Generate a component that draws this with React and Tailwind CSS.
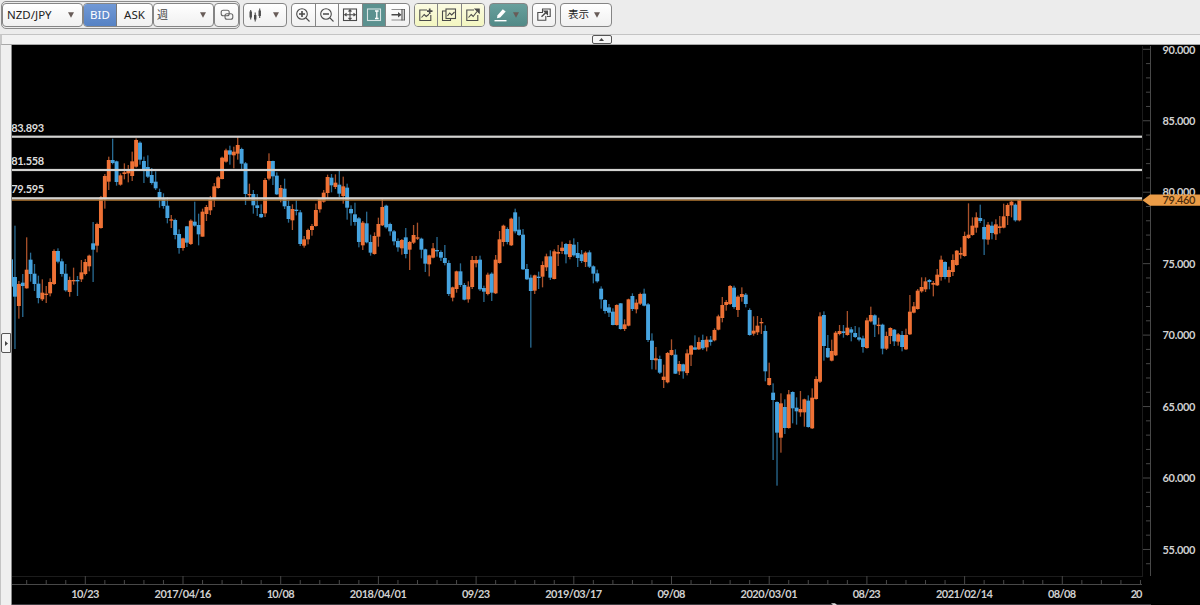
import React from "react";

// Weekly bars: direction, high, body top, body bottom, low (in 1/3 px below `top`)
const SEGMENTS = [
  {
    top: 110,
    bars: `d 448 448 530 530|d 347 501 560 717|u 513 522 588 626|d 492 518 528 621|u 382 479 535 536|d 428 449 492 515|d 462 491 522 543|d 497 521 564 580|u 508 548 568 573|u 528 551 555 579|u 505 516 550 559|u 418 423 522 525|d 415 423 455 460|d 446 454 492 500|d 462 491 541 545|u 500 510 546 560|u 473 510 514 524|d 498 510 514 558|u 450 487 508 516|u 447 456 492 496|u 434 437 469 484|d 336 400 419 516|u 338 342 407 427|u 258 262 354 356|u 192 198 268 296|u 140 150 215 240|d 86 150 159 163|d 152 154 216 227|u 190 196 224 227|u 160 187 192 208|u 165 183 190 217|u 125 154 198 213|u 85 90 170 173|d 94 98 149 164|d 140 153 180 219|d 136 171 200 204|d 174 195 219 224|d 184 215 235 240|d 236 246 269 293|d 250 267 288 296|d 262 287 324 340|u 315 328 332 354|d 326 330 375 388|d 358 372 414 431|u 383 385 414 422|d 348 349 398 411|u 328 332 402 405|d 275 335 347 350|d 311 345 373 406|u 296 305 380 380|u 285 291 312 333|u 258 268 301 315|u 219 229 268 291|u 198 202 234 236|u 140 143 207 208|u 116 121 155 158|d 107 121 134 164|u 110 125 136 175|u 81 105 131 149|d 113 117 161 178|d 156 160 252 285|u 221 252 256 266|d 240 252 286 311|d 252 286 294 318|d 283 312 322 324|u 204 210 310 321|u 130 153 206 211|d 152 153 199 225|d 187 197 253 255|u 225 234 263 277|d 206 236 289 297|d 270 288 327 338|u 283 297 331 360|d 270 299 303 316|d 300 307 402 408|u 378 388 407 413|u 356 360 388 403|u 342 348 360 377|u 281 300 348 350|u 265 267 298 308|u 240 248 275 278|u 194 201 249 268|d 192 203 226 247|u 193 218 231 237|d 180 224 251 261|u 200 229 258 281|d 221 233 293 329|d 286 297 310 347|d 278 313 336 347|d 321 325 396 412|u 333 338 406 420|d 305 340 397 400|d 374 396 428 437|u 367 378 432 434|u 323 342 380 410`,
  },
  {
    top: 180,
    bars: `u 55 81 136 138|d 74 77 142 146|d 128 132 154 167|d 150 154 184 196|d 175 183 202 215|u 177 180 205 224|d 144 172 222 235|u 183 186 209 270|u 135 165 188 192|u 128 172 176 180|d 173 176 209 235|d 206 208 251 276|u 224 226 253 289|u 189 205 233 235|d 171 210 214 230|d 211 216 233 243|d 195 234 249 256|d 241 249 342 348|u 320 322 353 364|u 272 274 327 338|d 250 274 315 321|d 309 315 359 361|u 304 320 358 368|u 228 240 321 327|u 228 240 250 262|d 227 239 328 333|d 317 324 335 366|u 278 284 342 346|d 277 281 338 363|u 225 239 340 342|u 153 178 249 251|u 134 137 186 199|d 142 147 186 193|u 113 116 196 198|d 86 97 154 160|d 110 149 165 168|d 147 164 268 270|d 252 267 298 300|d 284 293 333 503|u 284 286 332 342|d 275 290 294 327|u 244 255 290 322|u 221 229 262 273|d 211 229 293 300|u 208 214 297 298|u 195 216 221 258`,
  },
  {
    top: 220,
    bars: `u 65 83 93 102|d 69 72 103 130|u 61 72 111 118|d 55 74 106 110|d 66 99 114 141|d 90 103 123 129|u 94 98 126 141|d 91 97 140 144|d 136 139 161 190|d 149 160 184 188|d 199 206 238 266|d 238 240 273 281|d 252 262 278 291|d 265 275 315 316|u 253 255 315 317|d 249 250 327 329|u 298 313 327 333|u 236 238 317 319|d 220 228 267 273|u 238 248 268 280|u 218 222 251 255|d 206 221 257 259|d 249 253 360 366|d 340 362 420 448|u 381 415 421 449|d 407 417 458 462|u 434 470 480 504|u 396 399 487 490|u 358 390 405 407|d 388 404 461 462|u 423 432 454 465|d 431 433 454 476|u 388 400 459 466|u 375 377 404 438|d 346 382 389 390|u 352 366 388 390|d 344 360 385 390|u 349 359 382 394|d 348 359 366 377|u 325 330 361 364|u 284 289 329 331|u 231 255 294 307|u 240 246 255 272|u 195 198 252 255|d 197 203 261 266|u 226 230 270 291`,
  },
  {
    top: 270,
    bars: `u 52 72 81 95|d 69 74 102 112|d 115 120 195 197|u 139 182 191 197|u 138 167 187 195|u 144 156 160 192|d 166 183 304 334|u 278 324 345 347|d 340 368 390 570|d 394 396 488 647|u 370 400 503 548|d 388 411 474 492|u 360 373 474 476|d 364 366 415 460|d 382 413 424 464|u 363 417 427 440|u 386 388 427 470|d 376 392 471 473|u 355 383 475 477|u 319 327 387 389|u 127 139 335 339|d 124 135 228 272|d 195 234 262 264|u 209 243 272 274|u 183 188 256 258|u 165 183 192 196|d 165 184 189 203|u 123 173 195 197|d 171 178 188 214|d 168 189 201 204|d 172 202 209 214|d 197 205 231 248|u 143 151 234 236|u 110 135 154 157|d 133 136 164 201|u 143 164 168 193|d 161 164 236 253|u 185 198 236 240|u 172 174 198 222|d 177 179 214 228|u 189 193 215 227`,
  },
  {
    top: 180,
    bars: `d 453 465 501 514|u 446 465 508 510|u 345 395 463 465|u 366 379 398 400|u 327 332 387 389|u 292 321 334 338|u 292 304 328 336|d 297 300 306 328|u 303 309 314 349|u 267 284 316 318|u 227 239 291 302|d 244 246 291 298|u 260 270 291 308|u 223 240 276 288|u 210 212 255 257|u 202 219 224 236|u 155 168 228 230|u 70 164 174 177|u 112 137 165 167|u 97 112 143 158|d 74 114 123 129|d 118 141 178 225|u 126 134 179 194|d 125 137 159 178|u 118 133 163 180|u 108 139 144 160|u 71 109 143 145|u 70 75 108 135|u 62 65 76 112|d 70 74 121 125|u 58 60 121 124`,
  },
];

const BAR_STEP = 3.908;
const FIRST_BAR_X = 11.05;

const candles = SEGMENTS.flatMap(({ top, bars }) =>
  bars.split("|").map((bar) => {
    const [dir, ...values] = bar.split(" ");
    const [high, open, close, low] = values.map((v) => top + Number(v) / 3);
    return { up: dir === "u", high, open, close, low };
  }),
);

const priceToY = (price) => 192.2 + (80 - price) * 14.29;

const PRICES = Array.from({ length: 37 }, (_, i) => 90 - i);
const LEVELS = [
  { label: "83.893", y: 136.7 },
  { label: "81.558", y: 170 },
  { label: "79.595", y: 198.3 },
];
const DATES = [
  "10/23",
  "2017/04/16",
  "10/08",
  "2018/04/01",
  "09/23",
  "2019/03/17",
  "09/08",
  "2020/03/01",
  "08/23",
  "2021/02/14",
  "08/08",
];

const Candle = ({ candle, x }) => {
  const { up, high, open, close, low } = candle;
  return (
    <g>
      <rect
        x={x - 0.65}
        y={high}
        width="1.3"
        height={low - high}
        fill={up ? "#a9512a" : "#296b93"}
      />
      <rect
        x={x - 1.95}
        y={open}
        width="3.9"
        height={Math.max(close - open, 1.2)}
        fill={up ? "#ee7135" : "#46a3df"}
      />
    </g>
  );
};

const Chart = () => (
  <svg
    className="block h-[560px] w-[1188px] bg-black font-['Lato',sans-serif] text-[11px] font-bold"
    viewBox="12 45 1188 560"
  >
    {candles.map((candle, i) => (
      <Candle key={i} candle={candle} x={FIRST_BAR_X + i * BAR_STEP} />
    ))}

    {/* Current price line */}
    <rect x="12" y="199.3" width="1131" height="1.5" fill="#a8702f" />

    {/* Horizontal levels */}
    {LEVELS.map(({ label, y }) => (
      <g key={label}>
        <rect x="12" y={y - 1.1} width="1130" height="2.2" fill="#d3d3d1" />
        <text x="11.2" y={y - 5} fill="#dcdcdc" textLength="33">
          {label}
        </text>
      </g>
    ))}

    {/* Price axis */}
    <rect x="1142" y="46" width="1" height="531" fill="#1c1c1c" />
    <rect x="1150" y="46" width="1" height="530" fill="#484848" />
    {PRICES.map((price) => {
      const y = priceToY(price);
      const major = price % 5 === 0;
      return (
        <g key={price}>
          <rect
            x={major ? 1143 : 1146}
            y={y - 0.5}
            width={major ? 7 : 4}
            height="1"
            fill="#484848"
          />
          {major && (
            <text x="1162.5" y={y + 4.2} fill="#d0d0d0" textLength="33">
              {price.toFixed(3)}
            </text>
          )}
        </g>
      );
    })}
    <path d="M1142.5 200.2L1150 194.5H1200V205.8H1150Z" fill="#eb9c47" />
    <text x="1162.5" y="204.3" fill="#4b2c0b" fontWeight="600" textLength="33">
      79.460
    </text>

    {/* Date axis */}
    <rect x="12" y="576" width="1130" height="1" fill="#1c1c1c" />
    <rect x="12" y="584" width="1130" height="1" fill="#484848" />
    {Array.from({ length: 58 }, (_, i) => {
      const x = 85.3 + (i - 3) * 19.54;
      const major = (i - 3) % 5 === 0;
      return (
        <rect
          key={i}
          x={x - 0.5}
          y={major ? 576 : 580}
          width={x < 1142 ? 1 : 0}
          height={major ? 8 : 4}
          fill="#484848"
        />
      );
    })}
    {DATES.map((date, i) => (
      <text
        key={date + i}
        x={85.3 + i * 97.68}
        y="598.3"
        fill="#d0d0d0"
        textAnchor="middle"
        textLength={date.length > 5 ? 57 : 28}
      >
        {date}
      </text>
    ))}
    <text x="1130.8" y="598.3" fill="#d0d0d0" textLength="11.5">
      20
    </text>
    <rect x="12" y="604" width="1139" height="1" fill="#3c3a40" />
    <path d="M831 603.3h4l2 1.7h-4z" fill="#ddd" />
  </svg>
);

const Icon = ({ children, className = "text-[#4a4a4a]" }) => (
  <svg
    className={`h-4 w-4 shrink-0 ${className}`}
    viewBox="0 0 16 16"
    fill="none"
    stroke="currentColor"
    strokeWidth="1.1"
  >
    {children}
  </svg>
);

const Caret = ({ className = "" }) => (
  <svg className={`h-[6px] w-[6px] shrink-0 ${className}`} viewBox="0 0 6 6">
    <path d="M0 0.3H6L3 5.8Z" fill="#685c58" />
  </svg>
);

const BOX =
  "flex h-6 shrink-0 items-center overflow-hidden rounded-[4px] border border-[#858585] bg-linear-to-b from-white to-[#f0f0f0]";
const CELL = "flex h-full flex-1 items-center justify-center";

const Toolbar = () => (
  <div className="flex h-[34px] items-start bg-[#ececec] pl-px pt-px font-['Noto_Sans','Noto_Sans_CJK_JP',sans-serif] text-[11.5px] text-[#222]">
    <div className="flex h-7 w-[239px] items-center rounded-[5px] border border-[#8c8c8c]">
      <div className={`${BOX} w-[81px] pl-[4px]`}>
        <span className="w-[60px]">NZD/JPY</span>
        <Caret className="ml-[1px]" />
      </div>
      <div className={`${BOX} w-[70px]`}>
        <div className="flex h-full w-[33px] items-center justify-center border-r border-[#777] bg-linear-to-b from-[#7199d6] to-[#5682c4] text-white">
          BID
        </div>
        <div className={CELL}>ASK</div>
      </div>
      <div className={`${BOX} w-[61px] justify-between pl-[3px] pr-[7px]`}>
        <span className="text-[11px] text-[#444]">週</span>
        <Caret />
      </div>
      <div className={`${BOX} w-[25px] justify-center`}>
        <Icon className="text-[#666]">
          <rect x="2.2" y="3.2" width="8" height="5.6" rx="2" />
          <rect x="6" y="6.7" width="7.8" height="5.6" rx="2" />
        </Icon>
      </div>
    </div>

    <div className="flex items-center pt-[2px]">
      <div className={`${BOX} ml-[3px] w-[44px] justify-between pl-[4px] pr-[7px]`}>
        <Icon>
          <path d="M2.7 3v9.5M7.2 5.5v9M11.7 1.5v9.5" />
          <path d="M2.7 4.5v6M7.2 8v4.5M11.7 3.5v5.5" strokeWidth="2.4" />
        </Icon>
        <Caret />
      </div>

      <div className={`${BOX} ml-1 w-[119px] divide-x divide-[#858585]`}>
        <div className={CELL}>
          <Icon>
            <circle cx="7" cy="7" r="5.3" />
            <path d="M11 11l3.5 3.5" />
            <path d="M4 7h6M7 4v6" strokeWidth="1.6" />
          </Icon>
        </div>
        <div className={CELL}>
          <Icon>
            <circle cx="7" cy="7" r="5.3" />
            <path d="M11 11l3.5 3.5" />
            <path d="M4 7h6" strokeWidth="1.6" />
          </Icon>
        </div>
        <div className={CELL}>
          <Icon>
            <rect x="1.5" y="2" width="13" height="11.5" />
            <path d="M8 2v11.5M1.5 7.7h13M6.5 4.5L8 3l1.5 1.5M6.5 11L8 12.5 9.5 11M4.5 6.2L3 7.7l1.5 1.5M11.5 6.2L13 7.7l-1.5 1.5" />
          </Icon>
        </div>
        <div className={`${CELL} bg-[#5b918f]`}>
          <Icon className="text-white">
            <rect x="1.5" y="2" width="13" height="11.5" strokeOpacity="0.75" />
            <path d="M9 4h3.6M9 11.5h3.6M10.8 4v7.5" strokeWidth="1.3" />
          </Icon>
        </div>
        <div className={CELL}>
          <Icon>
            <path d="M1.5 2.5h13M1.5 13h13" strokeOpacity="0.6" />
            <path d="M12 2v11.5M14.3 2v11.5" />
            <path d="M1.5 7.7h9" strokeWidth="1.5" />
            <path d="M8 5l3.5 2.7L8 10.4z" fill="currentColor" stroke="none" />
          </Icon>
        </div>
      </div>

      <div className={`${BOX} ml-1 w-[71px] divide-x divide-[#858585]`}>
        <div className={`${CELL} bg-linear-to-b from-[#fbfbe2] to-[#f3f6c0]`}>
          <Icon>
            <path d="M9 3H1.8v10.5h11V8" />
            <path d="M3.5 10.5l2.7-3 2 2L11 7.3" />
            <path d="M9 4.2h5.5M11.7 1.5V7" strokeWidth="1.7" />
          </Icon>
        </div>
        <div className={`${CELL} bg-linear-to-b from-[#fbfbe2] to-[#f3f6c0]`}>
          <Icon>
            <path d="M5 4H1.5v9.5h8V12" />
            <rect x="5" y="2" width="9.5" height="9.5" />
            <path d="M6.5 9l2.2-3 2 2L13.5 5" />
          </Icon>
        </div>
        <div className={`${CELL} bg-linear-to-b from-[#fbfbe2] to-[#f3f6c0]`}>
          <Icon>
            <path d="M9 3H1.8v10.5h11V8" />
            <path d="M3.5 10.5l2.7-3 2 2L12 4.5" />
            <path d="M10.2 2h4v4z" fill="currentColor" />
          </Icon>
        </div>
      </div>

      <div className="ml-1 flex h-6 w-[39px] items-center justify-between rounded-[4px] border border-[#858585] bg-linear-to-b from-[#68a09d] to-[#528a87] pl-[3px] pr-[8px]">
        <Icon className="text-white">
          <path d="M1.5 13.7h12" strokeWidth="1.4" />
          <path d="M4 11.2l.5-3L9.8 2.2l2.9 2.3L7.2 10.4z" fill="currentColor" stroke="none" />
        </Icon>
        <Caret />
      </div>

      <div className={`${BOX} ml-1 w-6 justify-center`}>
        <Icon>
          <path d="M6.5 5V2h7.7v7.5H11" />
          <path d="M7 5.5H1.8v7.7h8V9" />
          <path d="M5.5 9.7l4.7-4.5" strokeWidth="1.5" />
          <path d="M8 4h3.5v3.5z" fill="currentColor" />
        </Icon>
      </div>

      <div className={`${BOX} ml-1 w-[52px] gap-[3px] pl-[7px]`}>
        <span className="w-[23px] whitespace-nowrap text-[10.5px]">表示</span>
        <Caret />
      </div>
    </div>
  </div>
);

const App = () => (
  <div className="h-[605px] w-[1200px] overflow-hidden bg-[#efefef]">
    <Toolbar />
    <div className="flex h-[11px] justify-center border-y border-l-2 border-b-[#a8a8a8] border-l-[#c8c8c8] border-t-[#c4c4c4] bg-[#f2f2f2] pl-px">
      <div className="flex h-[9px] w-5 items-center justify-center rounded-[2px] border border-[#555] bg-[#f6f6f6]">
        <svg className="h-[3px] w-[5px]" viewBox="0 0 5 3">
          <path d="M0 3L2.5 0 5 3Z" fill="#444" />
        </svg>
      </div>
    </div>
    <div className="flex">
      <div className="flex h-[560px] w-3 shrink-0 justify-end border-l border-r border-l-[#c4c4c4] border-r-[#888] pt-[288px]">
        <div className="flex h-[20px] w-[10px] items-center justify-center rounded-l-[2px] border border-[#555] bg-[#f6f6f6]">
          <svg className="h-[5px] w-[3px]" viewBox="0 0 3 5">
            <path d="M0 0L3 2.5 0 5Z" fill="#444" />
          </svg>
        </div>
      </div>
      <Chart />
    </div>
  </div>
);

export default App;
